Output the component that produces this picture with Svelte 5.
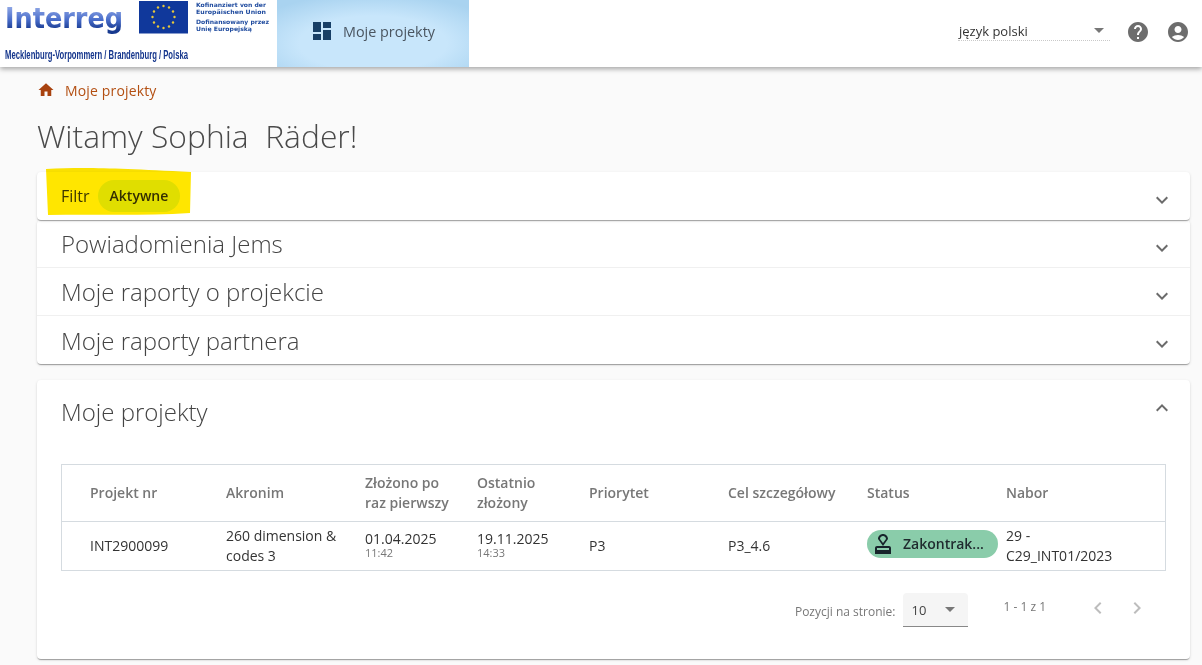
<script>
  const stars = Array.from({ length: 12 }, (_, i) => {
    const a = (i * Math.PI) / 6;
    return { x: 163.5 + 11 * Math.sin(a), y: 17 - 11 * Math.cos(a) };
  });
  const panels = ['Powiadomienia Jems', 'Moje raporty o projekcie', 'Moje raporty partnera'];
</script>

<div class="page">
  <header class="topbar">
    <svg class="logo" width="277" height="67" viewBox="0 0 277 67" aria-label="Interreg">
      <defs>
        <linearGradient id="ig" x1="0" x2="0" y1="0" y2="1">
          <stop offset="0.1" stop-color="#9db2ea" />
          <stop offset="0.55" stop-color="#4a6ecb" />
          <stop offset="0.85" stop-color="#17398f" />
        </linearGradient>
      </defs>
      <text x="5" y="28" class="ig" textLength="118" lengthAdjust="spacingAndGlyphs">Interreg</text>
      <rect x="139" y="1" width="49" height="32.5" fill="#10389b" />
      {#each stars as s}
        <circle cx={s.x} cy={s.y} r="1.2" fill="#e8c83a" />
      {/each}
      <text x="196" y="6.5" class="eu" textLength="70" lengthAdjust="spacingAndGlyphs">Kofinanziert von der</text>
      <text x="196" y="13.5" class="eu" textLength="70" lengthAdjust="spacingAndGlyphs">Europäischen Union</text>
      <text x="196" y="24" class="eu" textLength="73" lengthAdjust="spacingAndGlyphs">Dofinansowany przez</text>
      <text x="196" y="31" class="eu" textLength="56" lengthAdjust="spacingAndGlyphs">Unię Europejską</text>
      <text x="5" y="59" class="region" textLength="183" lengthAdjust="spacingAndGlyphs">Mecklenburg-Vorpommern / Brandenburg / Polska</text>
    </svg>
    <div class="tab">
      <svg width="18" height="18" viewBox="0 0 18 18">
        <path d="M0 0h8v10H0zM10 0h8v6h-8zM0 12h8v6H0zM10 8h8v10h-8z" fill="#173f66" />
      </svg>
      <span>Moje projekty</span>
    </div>
    <div class="spacer"></div>
    <div class="lang">
      <span>język polski</span>
      <i class="caret"></i>
    </div>
    <svg class="ico" width="24" height="24" viewBox="0 0 24 24">
      <path fill="#6d6d6d" d="M12 2C6.48 2 2 6.48 2 12s4.48 10 10 10 10-4.48 10-10S17.52 2 12 2zm1 17h-2v-2h2v2zm2.07-7.75-.9.92C13.45 12.9 13 13.5 13 15h-2v-.5c0-1.1.45-2.1 1.17-2.83l1.24-1.26c.37-.36.59-.86.59-1.41 0-1.1-.9-2-2-2s-2 .9-2 2H8c0-2.21 1.79-4 4-4s4 1.79 4 4c0 .88-.36 1.68-.93 2.25z" />
    </svg>
    <svg class="ico last" width="24" height="24" viewBox="0 0 24 24">
      <path fill="#6d6d6d" d="M12 2C6.48 2 2 6.48 2 12s4.48 10 10 10 10-4.48 10-10S17.52 2 12 2zm0 4c1.93 0 3.5 1.57 3.5 3.5S13.93 13 12 13s-3.5-1.57-3.5-3.5S10.07 6 12 6zm0 14c-2.03 0-4.43-.82-6.14-2.88C7.55 15.8 9.68 15 12 15s4.45.8 6.14 2.12C16.43 19.18 14.03 20 12 20z" />
    </svg>
  </header>

  <main class="content">
    <nav class="crumb">
      <svg width="18" height="18" viewBox="0 0 24 24"><path d="M10 20v-6h4v6h5v-8h3L12 3 2 12h3v8z" fill="#a8420f" /></svg>
      <span>Moje projekty</span>
    </nav>
    <h1>Witamy Sophia&nbsp; Räder!</h1>

    <section class="filter card">
      <span class="filter-label">Filtr</span>
      <span class="chip">Aktywne</span>
      <svg class="chev" width="24" height="24" viewBox="0 0 24 24"><path d="M7.41 8.59 12 13.17l4.59-4.58L18 10l-6 6-6-6z" fill="#6b6b6b" /></svg>
    </section>

    <section class="group card">
      {#each panels as p}
        <div class="row">
          <span>{p}</span>
          <svg class="chev" width="24" height="24" viewBox="0 0 24 24"><path d="M7.41 8.59 12 13.17l4.59-4.58L18 10l-6 6-6-6z" fill="#6b6b6b" /></svg>
        </div>
      {/each}
    </section>

    <section class="projects card">
      <div class="proj-head">
        <h2>Moje projekty</h2>
        <svg class="chev" width="24" height="24" viewBox="0 0 24 24"><path d="M12 8l6 6-1.41 1.41L12 10.83l-4.59 4.58L6 14z" fill="#6b6b6b" /></svg>
      </div>
      <div class="table">
        <div class="tr th">
          <div>Projekt nr</div>
          <div>Akronim</div>
          <div>Złożono po raz pierwszy</div>
          <div>Ostatnio złożony</div>
          <div>Priorytet</div>
          <div>Cel szczegółowy</div>
          <div>Status</div>
          <div>Nabor</div>
        </div>
        <div class="tr td">
          <div>INT2900099</div>
          <div>260 dimension &amp; codes 3</div>
          <div class="date">01.04.2025<small>11:42</small></div>
          <div class="date">19.11.2025<small>14:33</small></div>
          <div>P3</div>
          <div>P3_4.6</div>
          <div class="status-cell">
            <span class="status">
              <svg width="24" height="24" viewBox="0 0 24 24">
                <path fill="#17242b" d="M4 16v6h16v-6c0-1.1-.9-2-2-2H6c-1.1 0-2 .9-2 2zm14 2H6v-2h12v2zM12 2C9.24 2 7 4.24 7 7l5 7 5-7c0-2.76-2.24-5-5-5zm0 9L9 7c0-1.66 1.34-3 3-3s3 1.34 3 3l-3 4z" />
              </svg>
              <span class="status-text">Zakontrak...</span>
            </span>
          </div>
          <div class="nabor">29 - C29_INT01/2023</div>
        </div>
      </div>
      <div class="pager">
        <span class="per">Pozycji na stronie:</span>
        <div class="select"><span>10</span><i class="caret"></i></div>
        <span class="range">1 - 1 z 1</span>
        <svg width="24" height="24" viewBox="0 0 24 24"><path d="M15.41 7.41 14 6l-6 6 6 6 1.41-1.41L10.83 12z" fill="#bdbdbd" /></svg>
        <svg class="next" width="24" height="24" viewBox="0 0 24 24"><path d="M10 6 8.59 7.41 13.17 12l-4.58 4.59L10 18l6-6z" fill="#bdbdbd" /></svg>
      </div>
    </section>
  </main>

  <svg class="marker" width="150" height="52" viewBox="0 0 150 52">
    <path d="M2 2 C40 0 70 1 147 5 L146 46 C100 49 50 47 4 48 Z" fill="#ffe600" />
  </svg>
</div>

<style>
  :global(body) {
    margin: 0;
    background: #fafafa;
    font-family: "Open Sans", "Noto Sans", sans-serif;
    color: #2b2b2b;
  }
  .page {
    position: relative;
    height: 665px;
    overflow: hidden;
    background: #fafafa;
  }
  .topbar {
    position: relative;
    z-index: 2;
    display: flex;
    align-items: center;
    height: 67px;
    background: #fff;
    box-shadow: 0 2px 5px rgba(0, 0, 0, 0.35);
  }
  .logo { flex: none; }
  .ig {
    font-family: "DejaVu Sans", sans-serif;
    font-weight: 700;
    font-size: 29px;
    fill: url(#ig);
  }
  .eu {
    font-family: "DejaVu Sans", sans-serif;
    font-weight: 700;
    font-size: 6px;
    fill: #1e4a9e;
  }
  .region {
    font-family: "Liberation Sans", sans-serif;
    font-weight: 700;
    font-size: 13px;
    fill: #14358c;
  }
  .tab {
    display: flex;
    align-items: center;
    gap: 12px;
    box-sizing: border-box;
    width: 192px;
    height: 67px;
    padding-left: 36px;
    padding-bottom: 5px;
    font-size: 14.4px;
    color: #4a5560;
    background: radial-gradient(ellipse 70% 75% at 50% 65%, #c8e6fb 55%, #a9d3f0 100%);
  }
  .spacer { flex: 1; }
  .lang {
    display: flex;
    align-items: center;
    justify-content: space-between;
    box-sizing: border-box;
    width: 152px;
    height: 22px;
    margin-right: 16px;
    margin-bottom: 7px;
    padding: 2px 6px 0 1px;
    font-size: 13px;
    color: #333;
    border-bottom: 1px dotted #c9c9c9;
  }
  .caret {
    display: block;
    width: 0;
    height: 0;
    border-left: 5px solid transparent;
    border-right: 5px solid transparent;
    border-top: 5px solid #777;
  }
  .ico { margin-right: 16px; margin-bottom: 3px; }
  .ico.last { margin-right: 12px; }

  .content {
    box-sizing: border-box;
    padding: 0 12px 0 37px;
  }
  .crumb {
    display: flex;
    align-items: center;
    gap: 10px;
    height: 20px;
    margin-top: 13px;
    font-size: 14px;
    letter-spacing: 0.15px;
    color: #b34f12;
  }
  h1 {
    margin: 12px 0 0;
    height: 59px;
    font-weight: 300;
    font-size: 31.8px;
    line-height: 48px;
    color: #4a4a4a;
  }
  .card {
    position: relative;
    background: #fff;
    border-radius: 4px;
    box-shadow: 0 2px 1px -1px rgba(0, 0, 0, 0.2), 0 1px 1px rgba(0, 0, 0, 0.14), 0 1px 3px rgba(0, 0, 0, 0.12);
  }
  .filter {
    z-index: 1;
    display: flex;
    align-items: center;
    gap: 8px;
    height: 48px;
    padding-left: 24px;
    margin-top: 1px;
    font-size: 16px;
  }
  .filter-label { color: #3c3c3c; }
  .chip {
    padding: 0 12px;
    height: 32px;
    line-height: 32px;
    border-radius: 16px;
    background: #e0f7e0;
    font-size: 14px;
    font-weight: 600;
    color: #333;
  }
  .chev {
    position: absolute;
    right: 16px;
    top: 16px;
  }
  .group .row {
    position: relative;
    display: flex;
    align-items: center;
    height: 48px;
    padding-left: 24px;
    font-size: 24px;
    font-weight: 300;
    color: #444;
    box-sizing: border-box;
    border-bottom: 1px solid #f0f0f0;
  }
  .group .row:last-child { border-bottom: none; }
  .projects {
    height: 279px;
    margin-top: 16px;
    padding: 0 24px;
    box-sizing: border-box;
  }
  .proj-head {
    display: flex;
    align-items: center;
    height: 63px;
  }
  h2 {
    margin: 0;
    font-weight: 300;
    font-size: 24px;
    color: #444;
  }
  .table {
    margin-top: 21px;
    border: 1px solid #d5dbe0;
  }
  .tr {
    display: grid;
    grid-template-columns: 136px 139px 112px 112px 139px 139px 139px 1fr;
    padding-left: 28px;
    align-items: center;
    font-size: 14px;
    line-height: 20px;
  }
  .tr > div { padding-right: 24px; }
  .tr > .status-cell { padding-right: 0; margin-top: -3px; }
  .tr > .nabor { padding-right: 40px; }
  .th {
    box-sizing: border-box;
    height: 57px;
    margin-bottom: -1px;
    font-weight: 600;
    color: #777;
    border-bottom: 1px solid #d5dbe0;
  }
  .td {
    height: 49px;
    color: #333;
  }
  .tr > .date {
    margin-bottom: 1px;
    line-height: 16px;
  }
  .date small {
    display: block;
    font-size: 11px;
    line-height: 12px;
    color: #777;
  }
  .status {
    display: flex;
    align-items: center;
    box-sizing: border-box;
    width: 131px;
    height: 28px;
    padding-left: 4px;
    gap: 8px;
    border-radius: 14px;
    background: #8accaa;
  }
  .status-text {
    font-weight: 600;
    color: #1f2a2e;
  }
  .pager {
    display: flex;
    align-items: flex-start;
    margin-top: 22px;
    padding-right: 17px;
    justify-content: flex-end;
  }
  .per {
    margin-top: 10px;
    font-size: 12px;
    color: #777;
  }
  .select {
    display: flex;
    align-items: center;
    justify-content: space-between;
    box-sizing: border-box;
    width: 65px;
    height: 34px;
    margin-left: 8px;
    padding: 0 13px 0 8px;
    font-size: 13px;
    color: #444;
    background: #f5f5f5;
    border-bottom: 1px solid #888;
    border-radius: 4px 4px 0 0;
  }
  .range {
    margin: 5px 40px 0 35px;
    font-size: 12px;
    color: #777;
  }
  .pager svg { margin-top: 3px; }
  .pager .next { margin-left: 15px; }
  .marker {
    position: absolute;
    left: 44px;
    top: 167px;
    z-index: 3;
    mix-blend-mode: multiply;
  }
</style>
